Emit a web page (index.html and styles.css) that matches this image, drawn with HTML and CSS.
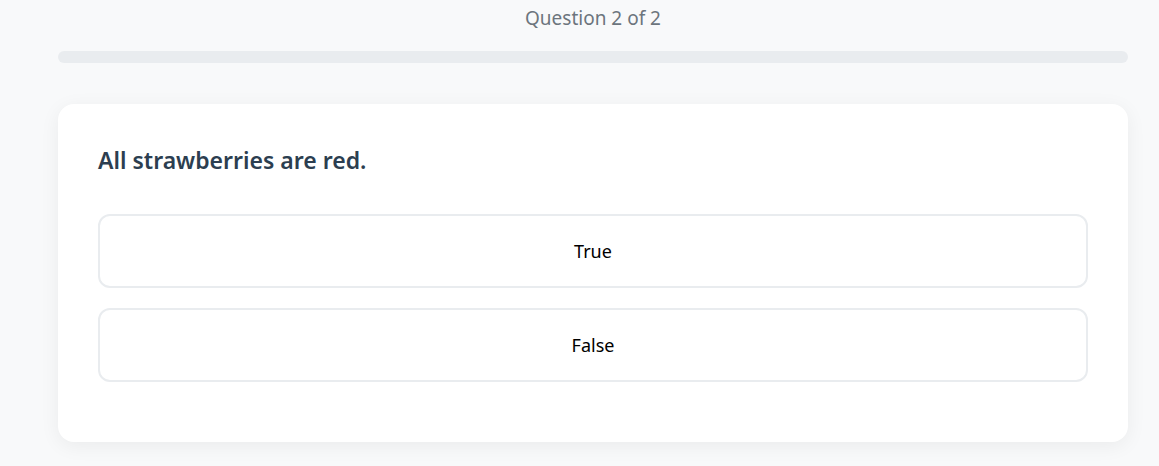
FILE: index.html
```html
<!DOCTYPE html>
<html>
<head>
<meta charset="utf-8">
<link rel="stylesheet" href="styles.css">
</head>
<body>
<div class="quiz">
  <div class="counter">Question 2 of 2</div>
  <div class="progress"><div class="progress-fill" style="width:0%"></div></div>
  <div class="card">
    <h2 class="question">All strawberries are red.</h2>
    <div class="options">
      <button class="option">True</button>
      <button class="option">False</button>
    </div>
  </div>
</div>
</body>
</html>
```
FILE: styles.css
```css
html, body {
  margin: 0;
  padding: 0;
}
body {
  background: #f8f9fa;
  font-family: "Noto Sans", "Open Sans", sans-serif;
  width: 1159px;
  height: 466px;
  overflow: hidden;
}
.quiz {
  margin-left: 58px;
  width: 1070px;
}
.counter {
  text-align: center;
  color: #6c757d;
  font-size: 19px;
  line-height: 24px;
  padding-top: 6px;
}
.progress {
  margin-top: 21px;
  height: 12px;
  border-radius: 6px;
  background: #e9ecef;
  overflow: hidden;
}
.progress-fill {
  height: 100%;
  background: #4a90e2;
}
.card {
  margin-top: 41px;
  background: #fff;
  border-radius: 16px;
  box-shadow: 0 4px 20px rgba(0, 0, 0, 0.06);
  padding: 40px 40px 40px;
  height: 338px;
  box-sizing: border-box;
}
.question {
  margin: 0;
  font-size: 23px;
  line-height: 32px;
  font-weight: 600;
  color: #2c3e50;
}
.options {
  margin-top: 38px;
  display: flex;
  flex-direction: column;
  gap: 20px;
}
.option {
  height: 74px;
  border: 2px solid #e9ecef;
  border-radius: 12px;
  background: #fff;
  font-family: inherit;
  font-size: 18px;
  color: #000;
  text-align: center;
  padding: 0;
}
```
